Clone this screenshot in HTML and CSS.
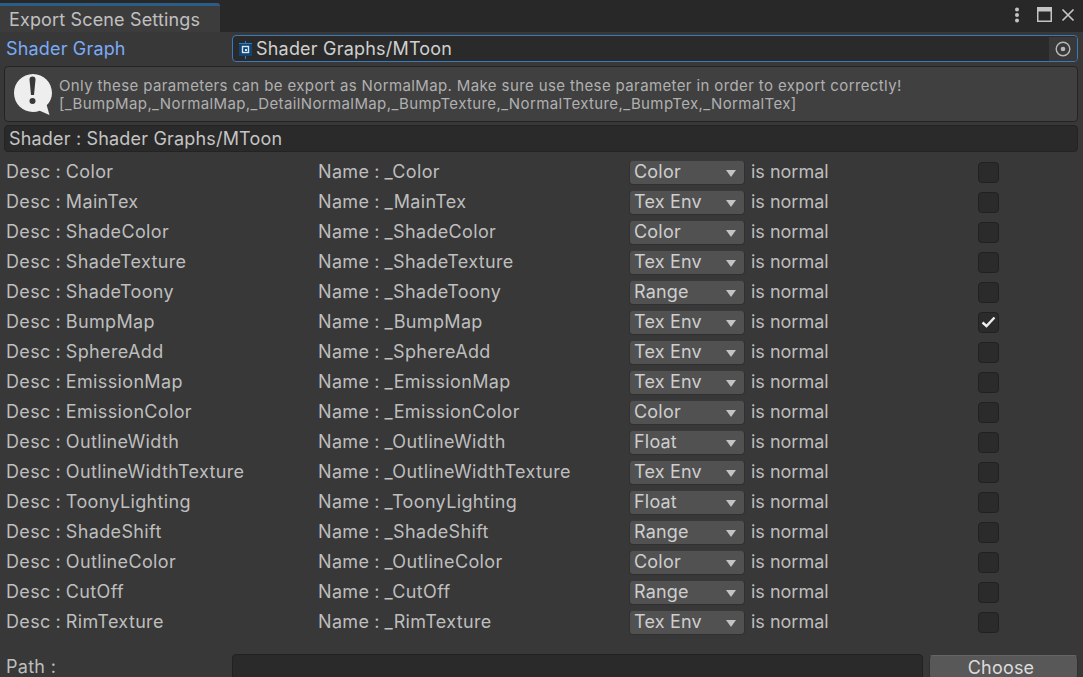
FILE: index.html
```html
<!DOCTYPE html>
<html lang="en">
<head>
<meta charset="utf-8">
<title>Export Scene Settings</title>
<link rel="stylesheet" href="styles.css">
</head>
<body>
<div class="window">
  <header class="tabbar">
    <div class="tab">Export Scene Settings</div>
    <div class="win-icons">
      <svg class="ic-dots" width="6" height="16" viewBox="0 0 6 16"><circle cx="3" cy="2.500" r="2" fill="#c4c4c4"/><circle cx="3" cy="8" r="2" fill="#c4c4c4"/><circle cx="3" cy="13.500" r="2" fill="#c4c4c4"/></svg>
      <svg class="ic-max" width="15" height="15" viewBox="0 0 15 15"><rect x=".75" y=".75" width="13.500" height="13.500" fill="none" stroke="#c4c4c4" stroke-width="1.500"/><rect x="1" y="1" width="13" height="3.500" fill="#c4c4c4"/></svg>
      <svg class="ic-close" width="14" height="14" viewBox="0 0 14 14"><path d="M1.500 1.500 12.500 12.500M12.500 1.500 1.500 12.500" stroke="#c4c4c4" stroke-width="1.700" fill="none"/></svg>
    </div>
  </header>
  <main class="content">
    <div class="field-row">
      <label class="label-focus">Shader Graph</label>
      <div class="objfield">
        <svg class="sg-icon" width="14" height="18" viewBox="0 0 14 18"><path d="M6.500 0v18" stroke="#2f7fc4"/><rect x="0" y="2" width="13" height="13" fill="#0f4474"/><path d="M0 2.500h13" stroke="#2f7fc4"/><rect x="3.500" y="5.500" width="6" height="6" fill="none" stroke="#d8e4ee" stroke-width="1.400"/><rect x="6" y="8" width="2" height="2" fill="#d8e4ee"/></svg>
        <span class="objname">Shader Graphs/MToon</span>
        <span class="picker"><svg width="16" height="16" viewBox="0 0 16 16"><circle cx="8" cy="8" r="6.800" fill="none" stroke="#b8b8b8" stroke-width="1.400"/><circle cx="8" cy="8" r="2.300" fill="#b8b8b8"/></svg></span>
      </div>
    </div>
    <div class="helpbox">
      <svg class="help-icon" width="40" height="42" viewBox="0 0 40 42"><path d="M20 1C9.500 1 1 9.500 1 20s8.500 19 19 19c2.400 0 4.600-.4 6.700-1.200L36.500 42l-2.800-9.700C37 29 39 25 39 20 39 9.500 30.500 1 20 1Z" fill="#eeeeee"/><path d="M16.500 6.500a3 3 0 0 1 6 0L21 22h-3Z" fill="#383838"/><circle cx="19.500" cy="28" r="3" fill="#383838"/></svg>
      <p class="help-text">Only these parameters can be export as NormalMap. Make sure use these parameter in order to export correctly!<br>[_BumpMap,_NormalMap,_DetailNormalMap,_BumpTexture,_NormalTexture,_BumpTex,_NormalTex]</p>
    </div>
    <div class="shader-box">Shader : Shader Graphs/MToon</div>
    <div class="rows">
      <div class="row"><span class="cell">Desc : Color</span><span class="cell">Name : _Color</span><span class="drop">Color</span><span class="isn">is normal</span><span class="check"></span></div>
      <div class="row"><span class="cell">Desc : MainTex</span><span class="cell">Name : _MainTex</span><span class="drop">Tex Env</span><span class="isn">is normal</span><span class="check"></span></div>
      <div class="row"><span class="cell">Desc : ShadeColor</span><span class="cell">Name : _ShadeColor</span><span class="drop">Color</span><span class="isn">is normal</span><span class="check"></span></div>
      <div class="row"><span class="cell">Desc : ShadeTexture</span><span class="cell">Name : _ShadeTexture</span><span class="drop">Tex Env</span><span class="isn">is normal</span><span class="check"></span></div>
      <div class="row"><span class="cell">Desc : ShadeToony</span><span class="cell">Name : _ShadeToony</span><span class="drop">Range</span><span class="isn">is normal</span><span class="check"></span></div>
      <div class="row"><span class="cell">Desc : BumpMap</span><span class="cell">Name : _BumpMap</span><span class="drop">Tex Env</span><span class="isn">is normal</span><span class="check"><svg width="15" height="12" viewBox="0 0 15 12"><path d="M1.500 6.500 5.500 10 13.500 1.500" fill="none" stroke="#eeeeee" stroke-width="2.400"/></svg></span></div>
      <div class="row"><span class="cell">Desc : SphereAdd</span><span class="cell">Name : _SphereAdd</span><span class="drop">Tex Env</span><span class="isn">is normal</span><span class="check"></span></div>
      <div class="row"><span class="cell">Desc : EmissionMap</span><span class="cell">Name : _EmissionMap</span><span class="drop">Tex Env</span><span class="isn">is normal</span><span class="check"></span></div>
      <div class="row"><span class="cell">Desc : EmissionColor</span><span class="cell">Name : _EmissionColor</span><span class="drop">Color</span><span class="isn">is normal</span><span class="check"></span></div>
      <div class="row"><span class="cell">Desc : OutlineWidth</span><span class="cell">Name : _OutlineWidth</span><span class="drop">Float</span><span class="isn">is normal</span><span class="check"></span></div>
      <div class="row"><span class="cell">Desc : OutlineWidthTexture</span><span class="cell">Name : _OutlineWidthTexture</span><span class="drop">Tex Env</span><span class="isn">is normal</span><span class="check"></span></div>
      <div class="row"><span class="cell">Desc : ToonyLighting</span><span class="cell">Name : _ToonyLighting</span><span class="drop">Float</span><span class="isn">is normal</span><span class="check"></span></div>
      <div class="row"><span class="cell">Desc : ShadeShift</span><span class="cell">Name : _ShadeShift</span><span class="drop">Range</span><span class="isn">is normal</span><span class="check"></span></div>
      <div class="row"><span class="cell">Desc : OutlineColor</span><span class="cell">Name : _OutlineColor</span><span class="drop">Color</span><span class="isn">is normal</span><span class="check"></span></div>
      <div class="row"><span class="cell">Desc : CutOff</span><span class="cell">Name : _CutOff</span><span class="drop">Range</span><span class="isn">is normal</span><span class="check"></span></div>
      <div class="row"><span class="cell">Desc : RimTexture</span><span class="cell">Name : _RimTexture</span><span class="drop">Tex Env</span><span class="isn">is normal</span><span class="check"></span></div>
    </div>
    <div class="path-row">
      <label class="path-label">Path :</label>
      <div class="path-field"></div>
      <button class="choose" type="button">Choose</button>
    </div>
  </main>
</div>
</body>
</html>
```
FILE: styles.css
```css
* { box-sizing: border-box; }
html, body { margin: 0; height: 100%; overflow: hidden; }
body {
  background: #383838;
  color: #bebebe;
  font-family: Inter, "Liberation Sans", sans-serif;
  font-size: 18px;
  line-height: 24px;
}
.window { width: 1083px; height: 677px; display: flex; flex-direction: column; overflow: hidden; }

.tabbar {
  height: 32px; flex: none;
  background: #282828;
  display: flex; justify-content: space-between;
  padding-top: 3px;
}
.tab {
  width: 220px; height: 29px;
  background: #3c3c3c;
  border-top: 3px solid #2c5d87;
  border-top-right-radius: 3px;
  padding-left: 9px;
  line-height: 27px;
  letter-spacing: .15px;
  color: #c0c0c0;
}
.win-icons { display: flex; align-items: center; height: 21px; margin-top: 1px; }
.ic-dots { margin-right: 17px; }
.ic-max { margin-right: 9px; }
.ic-close { margin-right: 8px; }

.content { flex: 1; display: flex; flex-direction: column; padding: 3px 5px 0 6px; }

.field-row { display: flex; height: 27px; align-items: center; }
.label-focus { width: 226px; color: #7baaf7; flex: none; letter-spacing: .17px; }
.objfield {
  flex: 1; height: 27px;
  background: #2a2a2a;
  border: 1.500px solid #3a79bb;
  border-radius: 4px;
  display: flex; align-items: center;
  padding-left: 6px;
  overflow: hidden;
}
.sg-icon { flex: none; margin: 3px 3px 0 0; }
.objname { flex: 1; color: #d0d0d0; letter-spacing: .2px; }
.picker {
  width: 28px; height: 24px; background: #393939;
  display: flex; align-items: center; justify-content: center;
}

.helpbox {
  margin: 4px 0 0 -2px; height: 56px;
  background: #404040;
  border: 1px solid #232323;
  border-radius: 4px;
  display: flex; align-items: center;
  padding-left: 8px;
}
.help-icon { flex: none; margin-right: 6px; }
.help-text { margin: 2px 0 0; font-size: 15px; line-height: 18px; color: #b0b0b0; letter-spacing: .38px; }

.shader-box {
  margin: 3px 0 0 -2px; height: 27px;
  background: #2a2a2a;
  border: 1px solid #232323;
  border-radius: 4px;
  padding-left: 4px;
  line-height: 25px;
  letter-spacing: .18px;
  color: #c4c4c4;
}

.rows { margin-top: 5px; display: flex; flex-direction: column; }
.row {
  height: 30px;
  display: grid;
  grid-template-columns: 312px 311px 116px 233px 21px;
  align-items: center;
}
.cell { letter-spacing: .35px; word-spacing: -.6px; white-space: nowrap; }
.drop {
  height: 25px;
  background: #515151;
  border: 1px solid #303030;
  border-top-color: #3a3a3a;
  border-radius: 4px;
  padding-left: 4px;
  line-height: 22px;
  letter-spacing: .2px;
  color: #cecece;
  position: relative;
}
.drop::after {
  content: "";
  position: absolute; right: 8px; top: 9px;
  border-left: 5.500px solid transparent;
  border-right: 5.500px solid transparent;
  border-top: 7px solid #c4c4c4;
}
.isn { padding-left: 6px; }
.check {
  width: 21px; height: 21px;
  background: #2b2b2b;
  border: 1px solid #212121;
  border-radius: 4px;
  display: flex; align-items: center; justify-content: center;
}

.path-row { margin-top: 17px; display: flex; height: 30px; }
.path-label { width: 226px; flex: none; padding-top: 1px; letter-spacing: .29px; }
.path-field {
  width: 691px; height: 30px;
  background: #2a2a2a;
  border: 1px solid #212121;
  border-radius: 4px;
}
.choose {
  margin: 1px 0 0 6px; width: 149px; height: 24px;
  background: #585858;
  border: 1px solid #303030;
  border-top-color: #656565;
  border-radius: 4px;
  padding: 0 5px 2px 0;
  font: inherit; letter-spacing: .2px; color: #dcdcdc;
}
```
